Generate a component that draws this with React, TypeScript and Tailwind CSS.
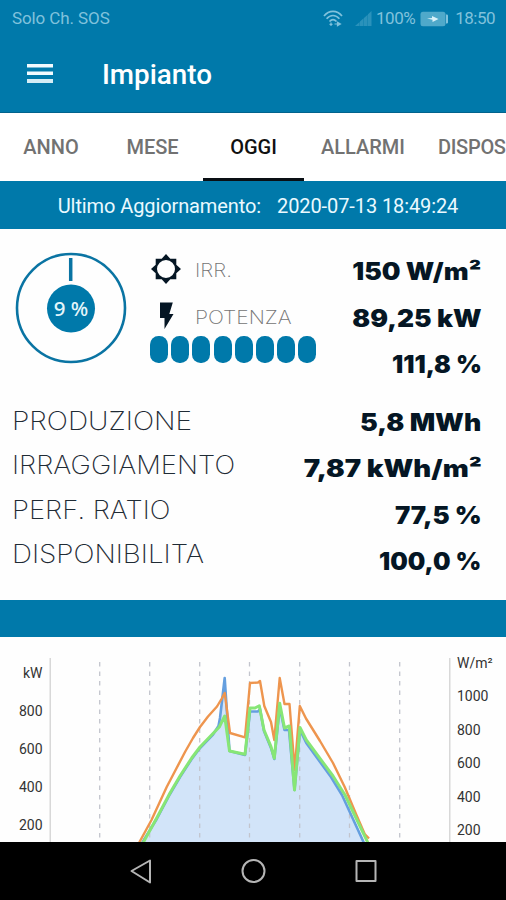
import React from "react";

const TABS = [
  { label: "ANNO", className: "w-[102px] text-[#727272]" },
  { label: "MESE", className: "w-[101px] text-[#727272]" },
  { label: "OGGI", className: "w-[101px] border-b-3 border-[#0a0f14] pt-[3px] text-[#111111]" },
  { label: "ALLARMI", className: "w-[118px] text-[#727272]" },
  { label: "DISPOS", className: "pl-[16px] tracking-[-0.3px] text-[#727272]" },
];

const TOTALS = [
  { label: "PRODUZIONE", className: "scale-x-[1.08]" },
  { label: "IRRAGGIAMENTO", className: "scale-x-[1.055]" },
  { label: "PERF. RATIO", className: "scale-x-[1.055]" },
  { label: "DISPONIBILITA", className: "scale-x-[1.07]" },
];

const LIVE_VALUES = [
  { value: "150 W/m²", className: "scale-x-[1.1]" },
  { value: "89,25 kW", className: "scale-x-[1.1]" },
  { value: "111,8 %", className: "scale-x-[1.035]" },
];

const TOTAL_VALUES = [
  { value: "5,8 MWh", className: "scale-x-[1.11]" },
  { value: "7,87 kWh/m²", className: "scale-x-[1.15]" },
  { value: "77,5 %", className: "scale-x-[1.075]" },
  { value: "100,0 %", className: "scale-x-[1.03]" },
];

const GRID_X = [99.7, 149.7, 199.7, 249.5, 299.7, 349.5, 399.7];

const POWER_AXIS = [
  { label: "kW", y: 36 },
  { label: "800", y: 74 },
  { label: "600", y: 112 },
  { label: "400", y: 150 },
  { label: "200", y: 188 },
];

const IRR_AXIS = [
  { label: "W/m²", y: 26 },
  { label: "1000", y: 59 },
  { label: "800", y: 92.5 },
  { label: "600", y: 126 },
  { label: "400", y: 159.5 },
  { label: "200", y: 193 },
];

const ORANGE =
  "139,206 151.5,183 166.7,150 185,115 193,101 200,90 208,79.5 217,69.5 221.5,62 224.7,56 230,96 245,100.3 250,46 258,45.5 260,44 264.3,69 271,85 274.3,103 279.7,41 284.5,67 289.5,67 294.7,133 299.8,69 306,81.5 320,104 333,126 344.7,150 356,177 364.7,197 369,201.5";
const GREEN =
  "143,206 156.7,181 170,156 180,139 191.7,121 200,110 213,96.5 219.3,90 224.7,79 229.5,114 245,117.3 250,71 255,71 259.3,68.7 264,93 271,109.7 274.3,121.3 279.7,66.3 284.5,91 289.3,89 294.5,153 300,90.5 306.3,103 333,139 345,158 368,206";
const BLUE =
  "142,206 156.7,182 170,157 180,140 191.7,122 200,111 213,97.5 218.5,89 220,81 224.7,41 229.5,114 245,118 250,74.5 258,74.5 260,72 264,94 271,111 274.3,122 279.7,70 284.5,93 289,93 294.5,153 300,93 306.3,106 331,140 342,158 364,206";

function StatusBar() {
  return (
    <div className="flex h-[37px] items-center pl-[12px] pr-[11px] text-[17px] text-[#80c2dc]">
      <span className="tracking-[-0.1px]">Solo Ch. SOS</span>
      <svg className="ml-auto h-[18px] w-[20px]" viewBox="0 0 20 18" fill="none" stroke="currentColor" strokeWidth="1.7">
        <path d="M1 6C6-.3 14-.3 19 6M3.600 8.800c3.800-4.400 9-4.400 12.800 0M6.500 11.500c2.300-2.400 4.700-2.400 7 0" />
        <path d="M8 12.500v3.500M6.500 14.300h3M11.500 14h5M14.500 12.200l3 1.800-3 1.800z" strokeWidth="1.200" />
      </svg>
      <svg className="ml-[12px] mr-[4px] h-[17px] w-[17px] text-[#2a92bb]" viewBox="0 0 17 17" fill="currentColor">
        <path d="M0 16 4.600 11.900V16zM5 16v-4.500l3.600-3.200V16zM9 16V7.900l3.600-3.200V16zM13 16V4.300L16.500 1v15z" />
      </svg>
      <span className="tracking-[-0.5px]">100%</span>
      <svg className="ml-[5px] h-[16px] w-[29px]" viewBox="0 0 29 16">
        <rect x="0.500" y="0.800" width="25" height="14.500" rx="2.500" fill="#4fa9ca" />
        <path d="M26 3.500h.800q1.200 0 1.200 1v7q0 1-1.200 1H26z" fill="#80c2dc" />
        <path d="m7 7.400 5-.400V5l6.500 2.900L12.500 11V8.800z" fill="#d9f1f9" />
      </svg>
      <span className="ml-[6px] tracking-[-0.5px]">18:50</span>
    </div>
  );
}

function Header() {
  return (
    <header className="h-[113px] border-b border-[#02638c] bg-[#0079aa]">
      <StatusBar />
      <div className="flex h-[73px] items-center pl-[27px]">
        <svg className="h-[20px] w-[26px]" viewBox="0 0 26 20">
          <path d="M0 0h26v3.500H0zM0 7.500h26V11H0z" fill="#f2fbff" />
          <path d="M0 15h26v4H0z" fill="#d5edf6" />
        </svg>
        <h1 className="ml-[49px] mt-[2px] text-[27.800px] font-medium leading-none text-white">Impianto</h1>
      </div>
    </header>
  );
}

function Tabs() {
  return (
    <nav className="flex h-[68px] overflow-hidden bg-white text-[20px] font-medium">
      {TABS.map((tab) => (
        <div
          key={tab.label}
          className={`flex shrink-0 items-center justify-center ${tab.className}`}
        >
          {tab.label}
        </div>
      ))}
    </nav>
  );
}

function Gauge() {
  return (
    <svg className="ml-[14px] mt-[22px] h-[114px] w-[114px] shrink-0" viewBox="0 0 114 114">
      <circle cx="57" cy="57" r="54" fill="none" stroke="#0a74a3" strokeWidth="2.600" />
      <path d="M56.700 7v23" stroke="#0a74a3" strokeWidth="3.500" />
      <circle cx="57" cy="57.500" r="24" fill="#0079aa" />
      <text x="57" y="65" textAnchor="middle" fontSize="20.500" fontWeight="500" fill="#e4f6fb" fontFamily="Noto Sans, sans-serif">
        9 %
      </text>
    </svg>
  );
}

function LiveLabels() {
  return (
    <div className="ml-[22px] mt-[22px] text-[19px] font-extralight text-[#747474]">
      <div className="flex h-[36px] items-center">
        <svg className="h-[32px] w-[32px]" viewBox="0 0 32 32">
          <path
            d="M16 1l4.300 4.700h6v6L31 16l-4.700 4.300v6h-6L16 31l-4.300-4.700h-6v-6L1 16l4.700-4.300v-6h6zM16 7a9 9 0 1 0 0 18 9 9 0 0 0 0-18z"
            fill="#051624"
            fillRule="evenodd"
          />
        </svg>
        <span className="ml-[13px] mt-[4px] origin-left scale-x-[1.09]">IRR.</span>
      </div>
      <div className="mt-[9px] flex h-[40px] items-center">
        <svg className="mb-[1px] h-[28px] w-[32px]" viewBox="0 0 32 28">
          <path d="M10 0.500h12.800l-3.500 11.500h4.200L14.500 27V16H10z" fill="#051624" />
        </svg>
        <span className="ml-[13px] mt-[4px] origin-left scale-x-[1.11]">POTENZA</span>
      </div>
      <div className="flex gap-[3.200px]">
        {Array.from({ length: 8 }, (_, i) => (
          <span key={i} className="h-[27px] w-[18px] rounded-[8.500px] bg-[#0079aa]" />
        ))}
      </div>
    </div>
  );
}

function ValueRow({ value, className }: { value: string; className: string }) {
  return (
    <div className="flex h-[46.500px] items-center justify-end whitespace-nowrap">
      <span className={`origin-right ${className}`}>{value}</span>
    </div>
  );
}

function Summary() {
  return (
    <section className="flex h-[371px] bg-[#fefefe] font-[Inter,sans-serif]">
      <div className="w-[320px] shrink-0">
        <div className="flex h-[169px]">
          <Gauge />
          <LiveLabels />
        </div>
        <div className="pl-[12px] text-[26px] font-extralight text-[#1f2b35]">
          {TOTALS.map((total) => (
            <div key={total.label} className="flex h-[44.500px] items-center whitespace-nowrap">
              <span className={`origin-left ${total.className}`}>{total.label}</span>
            </div>
          ))}
        </div>
      </div>
      <div className="flex-1 pr-[24.500px] pt-[20px] text-[24px] font-black text-[#051624]">
        {LIVE_VALUES.map((row) => (
          <ValueRow key={row.value} {...row} />
        ))}
        <div className="mt-[11px]">
          {TOTAL_VALUES.map((row) => (
            <ValueRow key={row.value} {...row} />
          ))}
        </div>
      </div>
    </section>
  );
}

function Chart() {
  return (
    <svg className="block h-[205px] w-[506px] bg-[#fefefe]" viewBox="0 0 506 205" fontFamily="Roboto, sans-serif" fontSize="14">
      <polygon points={BLUE} fill="#d2e4f9" />
      {GRID_X.map((x) => (
        <path key={x} d={`M${x} 25V201`} stroke="#c3c5cd" strokeWidth="1.300" strokeDasharray="4.500 5" />
      ))}
      <path d="M50.200 21V205M449.800 21V205" stroke="#cfcfcf" strokeWidth="1.200" />
      <g fill="none" strokeLinejoin="round">
        <polyline points={BLUE} stroke="#659fdf" strokeWidth="2.600" />
        <polyline points={ORANGE} stroke="#ee954e" strokeWidth="2.400" />
        <polyline points={GREEN} stroke="#87e676" strokeWidth="3" />
      </g>
      <g fill="#333333">
        {POWER_AXIS.map((tick) => (
          <text key={tick.label} x="42.500" y={tick.y + 5} textAnchor="end">
            {tick.label}
          </text>
        ))}
        {IRR_AXIS.map((tick) => (
          <text key={tick.label} x="457" y={tick.y + 5}>
            {tick.label}
          </text>
        ))}
      </g>
    </svg>
  );
}

function NavigationBar() {
  return (
    <footer className="flex h-[58px] justify-center bg-black">
      <svg className="h-[58px] w-[260px]" viewBox="0 0 260 58" fill="none" stroke="#b5b5b5" strokeWidth="2" strokeLinejoin="round">
        <path d="M27 18.500v22L8.500 29z" />
        <circle cx="130.500" cy="29" r="11" />
        <path d="M233.500 19h19v20h-19z" />
      </svg>
    </footer>
  );
}

export default function App() {
  return (
    <main className="flex h-[900px] w-[506px] flex-col overflow-hidden bg-white font-[Roboto,sans-serif]">
      <Header />
      <Tabs />
      <div className="flex h-[48px] items-center justify-center bg-[#0079aa] pl-[10px] pt-[2px] text-[20px] tracking-[-0.1px] text-[#eaf9ff]">
        <span>Ultimo Aggiornamento:</span>
        <span className="ml-[16px]">2020-07-13 18:49:24</span>
      </div>
      <Summary />
      <div className="h-[37px] bg-[#0079aa]" />
      <Chart />
      <NavigationBar />
    </main>
  );
}
